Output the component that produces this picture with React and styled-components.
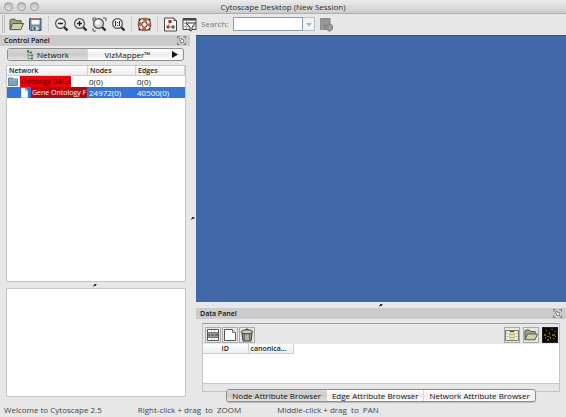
import React from "react";
import styled, { createGlobalStyle, css } from "styled-components";

const Global = createGlobalStyle`
  * { box-sizing: border-box; }
  body { margin: 0; background: #e7e7e7; }
  body, button, input, table { font-family: "Open Sans", "Noto Sans", sans-serif; font-size: 8px; line-height: 10px; color: #222; }
  button { padding: 0; border: 0; background: none; }
  svg { display: block; flex: none; }
`;

const Window = styled.div`
  display: flex;
  flex-direction: column;
  min-height: 100vh;
`;
const TitleBar = styled.header`
  display: grid;
  grid-template-columns: 1fr auto 1fr;
  align-items: center;
  height: 14px;
  padding: 0 4px;
  border-bottom: 1px solid #adadad;
  background: linear-gradient(#ececec, #cccccc);
`;
const Lights = styled.div`
  display: flex;
  gap: 4px;
`;
const Light = styled.button`
  width: 9px;
  height: 9px;
  border: 1px solid #9c9c9c;
  border-radius: 50%;
  background: linear-gradient(#b9b9b9, #e6e6e6);
`;
const Title = styled.h1`
  margin: 0;
  font-size: 8px;
  line-height: 12px;
  font-weight: 400;
  color: #2c2c2c;
`;
const Toolbar = styled.div`
  display: flex;
  align-items: center;
  gap: 4px;
  height: 20px;
  padding-left: 2px;
  background: #e7e7e7;
`;
const Handle = styled.span`
  width: 3px;
  height: 18px;
  border: solid #bdbdbd;
  border-width: 0 1px;
`;
const Separator = styled.span`
  width: 3px;
  height: 16px;
  background: repeating-linear-gradient(#b5b5b5 0 1px, transparent 1px 2px) 1px 0 / 1px 100% no-repeat;
`;
const ToolButton = styled.button`
  width: 15px;
  height: 15px;
`;
const SearchLabel = styled.label`
  width: 28px;
  color: #777;
  white-space: nowrap;
`;
const SearchBox = styled.div`
  display: flex;
  width: 82px;
  height: 14px;
`;
const SearchInput = styled.input`
  width: 70px;
  border: 1px solid #84a0b8;
  border-radius: 0;
  padding: 0 2px;
  background: #fff;
`;
const DropButton = styled.button`
  display: grid;
  place-items: center;
  width: 12px;
  border: 1px solid #b3c1cc;
  border-left: 0;
  background: #f2f2f2;
`;
const Main = styled.main`
  display: grid;
  grid-template-columns: 190px 6px minmax(0, 1fr);
  flex: 1;
  padding-top: 1px;
`;
const Column = styled.section`
  display: flex;
  flex-direction: column;
  min-width: 0;
  padding-bottom: ${(p) => (p.$inset ? 5 : 0)}px;
`;
const PanelHeader = styled.div`
  display: flex;
  align-items: center;
  justify-content: space-between;
  height: 11px;
  padding: 0 4px;
  background: #cbcbcb;
`;
const PanelTitle = styled.h2`
  margin: 0;
  font-size: 7px;
  line-height: 10px;
  font-weight: 600;
  color: #111;
`;
const FloatButton = styled.button`
  width: 9px;
  height: 9px;
`;
const TabBar = styled.div`
  display: flex;
  height: 13px;
  border: 1px solid #8d8d8d;
  border-radius: 3px;
  overflow: hidden;
  background: linear-gradient(#fff, #ededed 50%, #fafafa);
  ${(p) =>
    p.$bottom
      ? css`
          align-self: center;
          margin-top: -3px;
          box-shadow: 0 1px 1px #bbb;
          z-index: 1;
        `
      : css`
          margin: 2px 6px 4px 7px;
        `}
`;
const Tab = styled.button`
  display: flex;
  align-items: center;
  justify-content: center;
  gap: 3px;
  flex: ${(p) => p.$grow || "none"};
  padding: 0 5px;
  font-size: 8px;
  font-weight: 500;
  white-space: nowrap;
  color: #111;
  background: ${(p) => (p.$active ? "linear-gradient(#d8d8d8, #cacaca 50%, #e2e2e2)" : "transparent")};
  border-right: ${(p) => (p.$last ? 0 : "1px solid #d6d6d6")};
`;
const Pane = styled.div`
  flex: ${(p) => p.$flex};
  margin: 0 4px 0 6px;
  border: 1px solid #c6c6c6;
  background: #fff;
`;
const NetworkTable = styled.table`
  width: 100%;
  table-layout: fixed;
  border-collapse: separate;
  border-spacing: 0;
`;
const Head = styled.th`
  width: ${(p) => p.$width || "auto"};
  height: 10px;
  padding: 0 2px;
  font-weight: 600;
  font-size: 7px;
  line-height: 9px;
  text-align: ${(p) => p.$align || "left"};
  border-bottom: 1px solid #cfcfcf;
  border-right: 1px solid #cfcfcf;
  background: linear-gradient(#fff, #ededed);
`;
const Row = styled.tr`
  background: ${(p) => (p.$selected ? "#3476d8" : "#fff")};
  color: ${(p) => (p.$selected ? "#fff" : "#222")};
`;
const Cell = styled.td`
  height: 11px;
  padding: 0 0 0 1px;
  font-size: 8px;
  line-height: 11px;
  white-space: nowrap;
`;
const TreeItem = styled.div`
  display: flex;
  align-items: center;
  gap: 2px;
  height: 11px;
  padding-left: ${(p) => (p.$depth ? 12 : 0)}px;
`;
const NodeLabel = styled.span`
  height: 11px;
  padding: 0 1px;
  font-size: 7px;
  line-height: 11px;
  font-weight: 500;
  color: ${(p) => (p.$selected ? "#fff" : "#3c0000")};
  background: ${(p) => (p.$selected ? "#b40810" : "#ef0008")};
`;
const Splitter = styled.div`
  display: grid;
  place-items: center;
  height: ${(p) => (p.$vertical ? "auto" : "6px")};
`;
const Canvas = styled.div`
  flex: 1;
  border-top: 1px solid #2e548f;
  background: #4169a9;
`;
const DataFrame = styled.div`
  display: flex;
  flex-direction: column;
  margin: 4px 6px 0;
  padding: 1px 0 7px;
  border: 1px solid #c4c4c4;
  border-top: 1px solid #9f9f9f;
  border-radius: 1px;
`;
const DataTools = styled.div`
  display: flex;
  align-items: center;
  justify-content: space-between;
  height: 19px;
  padding: 0 1px 0 2px;
`;
const ToolGroup = styled.div`
  display: flex;
  gap: ${(p) => (p.$wide ? 3 : 1)}px;
`;
const DataButton = styled.button`
  width: 16px;
  height: 16px;
  border: 1px solid ${(p) => (p.$dark ? "#222" : "#aaa")};
`;
const Sheet = styled.div`
  height: 40px;
  border-bottom: 1px solid #c6c6c6;
  background: #fff;
`;
const DataTable = styled.table`
  width: 91px;
  table-layout: fixed;
  border-collapse: separate;
  border-spacing: 0;
`;
const StatusBar = styled.footer`
  display: flex;
  align-items: center;
  gap: 36px;
  height: 15px;
  padding-left: 4px;
  color: #444;
  white-space: pre;
`;

function Magnifier({ kind }) {
  return (
    <svg width="15" height="15" viewBox="0 0 15 15">
      {kind === "fit" && <path d="M1 4V1h3M11 1h3v3M1 11v3h3" fill="none" stroke="#555" />}
      <path d="M10 10l3.5 3.5" stroke="#303030" strokeWidth="2.4" />
      <circle cx="6.5" cy="6.5" r="4.9" fill={kind === "fit" ? "#d9d9d9" : "#ececec"} stroke="#525252" strokeWidth="1.2" />
      {kind === "out" && <path d="M4 6.5h5" stroke="#222" strokeWidth="1.5" />}
      {kind === "in" && <path d="M4 6.5h5M6.5 4v5" stroke="#222" strokeWidth="1.5" />}
      {kind === "fit" && <circle cx="5.7" cy="5.2" r="2.3" fill="#fafafa" />}
      {kind === "actual" && <path d="M4.5 4v5M8.5 4v5M6.5 5v1M6.5 8v1" stroke="#333" />}
    </svg>
  );
}
const FolderOpen = ({ size = 15 }) => (
  <svg width={size} height={size} viewBox="0 0 15 15">
    <path d="M1 12.5V3.2l1-1h4l1 1.5h5v2.5" fill="#9ca681" stroke="#4e573e" />
    <path d="M1.2 12.6l2.6-6.2h10.7L11.8 12.6z" fill="#cbd2ae" stroke="#4e573e" />
  </svg>
);
const Save = () => (
  <svg width="15" height="15" viewBox="0 0 15 15">
    <path d="M1.5 1.5h11.5v12H2.5l-1-1z" fill="#668daf" stroke="#46515b" />
    <path d="M3.5 1.5h8v6h-8z" fill="#f6f6f3" />
    <path d="M3.5 2.2h8" stroke="#c95046" strokeWidth="1.5" />
    <path d="M4.5 9.5h6v4h-6z" fill="#d6d6d6" />
    <path d="M5.5 10h2v3h-2z" fill="#425463" />
  </svg>
);
const LifeRing = () => (
  <svg width="15" height="15" viewBox="0 0 15 15">
    <path d="M2 2l2 2M13 2l-2 2M2 13l2-2M13 13l-2-2" stroke="#443b38" strokeWidth="2.5" />
    <circle cx="7.5" cy="7.5" r="4.5" fill="none" stroke="#4b302b" strokeWidth="4.6" />
    <circle cx="7.5" cy="7.5" r="4.5" fill="none" stroke="#f1e8df" strokeWidth="2.8" />
    <circle cx="7.5" cy="7.5" r="4.5" fill="none" stroke="#d45635" strokeWidth="2.8" strokeDasharray="4 3.07" strokeDashoffset="2" />
  </svg>
);
const VizMap = () => (
  <svg width="15" height="15" viewBox="0 0 15 15">
    <path d="M1.5 1h9.5l2.5 2.5V14h-12z" fill="#f8f8f4" stroke="#444" />
    <path d="M11 1v2.5h2.5" fill="#ccc" stroke="#555" />
    <path d="M7 5L4.5 10H10" fill="none" stroke="#777" strokeWidth=".7" />
    <path d="M5.5 3h3v3h-3z" fill="#8f2f28" />
    <circle cx="5" cy="10" r="1.8" fill="#b1472e" />
    <path d="M10 7.8l2.2 2.2-2.2 2.2L7.8 10z" fill="#4f7c43" />
  </svg>
);
const Filter = () => (
  <svg width="15" height="15" viewBox="0 0 15 15">
    <path d="M1 1.5h13v11H1z" fill="#eee" stroke="#454545" />
    <path d="M1 2.5h13" stroke="#454545" strokeWidth="2" />
    <path d="M1 6.5h13M1 9.5h13M4.5 4v8" stroke="#aaa" />
    <path d="M4 6h9.5L10 10v3l-2 1v-4z" fill="#fff" stroke="#333" />
  </svg>
);
const Book = () => (
  <svg width="15" height="15" viewBox="0 0 15 15">
    <path d="M1 1h10.5v12H1z" fill="#8c8c8c" />
    <path d="M3 1v12M5 4h5M5 6h5" stroke="#a5a5a5" />
    <path d="M7.5 9l2-2h2L13.5 9v3l-2 2h-2l-2-2z" fill="#9a9a9a" stroke="#808080" />
  </svg>
);
const FloatIcon = () => (
  <svg width="9" height="9" viewBox="0 0 9 9">
    <path d="M.5 2.5v-2h2M6.5.5h2v2M.5 6.5v2h2M6.5 8.5h2v-2" fill="none" stroke="#777" />
    <path d="M2.5 2.5h2v2h-2z" fill="#eee" stroke="#888" />
    <path d="M4.5 3.5h2v3h-3v-2" fill="#eee" stroke="#888" />
  </svg>
);
const SplitMark = () => (
  <svg width="4" height="3" viewBox="0 0 4 3">
    <path d="M1 0h2v2H1z" fill="#333" />
    <path d="M0 1h1v2H0zM3 0h1v1H3z" fill="#888" />
  </svg>
);
const TreeIcon = () => (
  <svg width="8" height="10" viewBox="0 0 8 10">
    <path d="M2 1v7.5h4M2 2.5h3M2 5.5h4" fill="none" stroke="#6d9b76" />
    <path d="M1 0h2v2H1zM4 1.5h2v2H4zM5 4.5h2v2H5zM5 7.5h2v2H5z" fill="#358b45" />
  </svg>
);
const BlueFolder = () => (
  <svg width="10" height="9" viewBox="0 0 10 9">
    <path d="M.5 2V1h4l1 1h4v6.5h-9z" fill="#78a5bf" stroke="#5d879f" />
    <path d="M1 3h8" stroke="#8db6cc" />
  </svg>
);
const Page = () => (
  <svg width="9" height="10" viewBox="0 0 9 10">
    <path d="M1.5.5h4l2 2v7h-6z" fill="#fff" stroke="#d5e1f2" />
    <path d="M5.5.5v2h2" fill="#ccd" stroke="#8aa4c4" />
  </svg>
);
const AttributeIcon = () => (
  <svg width="14" height="14" viewBox="0 0 14 14">
    <path d="M1.5 1.5h11v11h-11z" fill="#fff" stroke="#555" />
    <path d="M5.5 2v10M8.5 2v10" stroke="#ccc" />
    <path d="M2 5h10v4H2z" fill="#999" />
    <path d="M2 4.5h10M2 9.5h10" stroke="#777" />
    <path d="M1 7h12" stroke="#444" strokeDasharray="3 1" />
  </svg>
);
const NewPage = () => (
  <svg width="14" height="14" viewBox="0 0 14 14">
    <path d="M1.5 1.5h8l3 3v8h-11z" fill="#fff" stroke="#555" />
    <path d="M9.5 1.5v3h3" fill="#ddd" stroke="#777" />
  </svg>
);
const Trash = () => (
  <svg width="14" height="14" viewBox="0 0 14 14">
    <path d="M2 5h10l-1 8H3z" fill="#97978a" stroke="#3c3c36" />
    <path d="M4.5 6l.3 6M9.5 6l-.3 6" stroke="#55554d" strokeWidth=".8" />
    <path d="M6 6.5V12M8 6.5V12" stroke="#d2d2c4" />
    <ellipse cx="7" cy="3.8" rx="5.8" ry="2" fill="#cbcbba" stroke="#44443d" />
    <path d="M5.5 1.8q1.5-2 3 0" fill="none" stroke="#333" />
  </svg>
);
const SelectAttributes = () => (
  <svg width="14" height="14" viewBox="0 0 14 14">
    <path d="M.5 2.5h13v10H.5z" fill="#eee" stroke="#777" />
    <path d="M1 5.5h12M1 8.5h12" stroke="#c4c4c4" />
    <path d="M4 3h6v9H4z" fill="#ead79b" />
    <path d="M5 3.5h4" stroke="#44433c" />
    <path d="M4 6.5h6M4 9.5h6" stroke="#cdb676" />
  </svg>
);
const Matrix = () => (
  <svg width="14" height="14" viewBox="0 0 14 14">
    <path d="M0 0h14v14H0z" fill="#0c0905" />
    <path d="M1 6h2v2H1zM4 8h3v1H4zM6 4h1v3H6zM8 1h2v1H8zM9 6h3v2H9zM11 3h2v1h-2zM4 11h2v2H4zM10 10h2v1h-2z" fill="#7a581f" />
    <path d="M2 9h1v1H2zM7 9h1v2H7zM12 8h1v1h-1zM3 2h1v1H3z" fill="#a67d2d" />
  </svg>
);
const Triangle = ({ down }) => (
  <svg width="6" height="7" viewBox="0 0 6 7">
    <path d={down ? "M0 2h6L3 5.5z" : "M0 0l6 3.5L0 7z"} fill={down ? "#a3b6c5" : "#111"} />
  </svg>
);

export default function App() {
  return (
    <Window>
      <Global />
      <TitleBar>
        <Lights>
          <Light aria-label="Close" />
          <Light aria-label="Minimize" />
          <Light aria-label="Zoom window" />
        </Lights>
        <Title>Cytoscape Desktop (New Session)</Title>
      </TitleBar>
      <Toolbar>
        <Handle />
        <ToolButton aria-label="Open"><FolderOpen /></ToolButton>
        <ToolButton aria-label="Save"><Save /></ToolButton>
        <Separator />
        <ToolButton aria-label="Zoom out"><Magnifier kind="out" /></ToolButton>
        <ToolButton aria-label="Zoom in"><Magnifier kind="in" /></ToolButton>
        <ToolButton aria-label="Zoom to fit"><Magnifier kind="fit" /></ToolButton>
        <ToolButton aria-label="Actual size"><Magnifier kind="actual" /></ToolButton>
        <Separator />
        <ToolButton aria-label="Help"><LifeRing /></ToolButton>
        <Separator />
        <ToolButton aria-label="Visual styles"><VizMap /></ToolButton>
        <ToolButton aria-label="Filters"><Filter /></ToolButton>
        <SearchLabel htmlFor="search">Search:</SearchLabel>
        <SearchBox>
          <SearchInput id="search" />
          <DropButton aria-label="Search history"><Triangle down /></DropButton>
        </SearchBox>
        <ToolButton aria-label="Configure search"><Book /></ToolButton>
      </Toolbar>
      <Main>
        <Column $inset>
          <PanelHeader>
            <PanelTitle>Control Panel</PanelTitle>
            <FloatButton aria-label="Float control panel"><FloatIcon /></FloatButton>
          </PanelHeader>
          <TabBar role="tablist">
            <Tab role="tab" aria-selected="true" $active $grow="1 1 0"><TreeIcon />Network</Tab>
            <Tab role="tab" aria-selected="false" $grow="1 1 0" $last>VizMapper™</Tab>
            <Tab aria-label="More tabs" $last><Triangle /></Tab>
          </TabBar>
          <Pane $flex="218 1 0">
            <NetworkTable>
              <thead>
                <tr>
                  <Head>Network</Head>
                  <Head $width="48px">Nodes</Head>
                  <Head $width="49px">Edges</Head>
                </tr>
              </thead>
              <tbody>
                <Row>
                  <Cell><TreeItem><BlueFolder /><NodeLabel>Ontology DAGs</NodeLabel></TreeItem></Cell>
                  <Cell>0(0)</Cell>
                  <Cell>0(0)</Cell>
                </Row>
                <Row $selected>
                  <Cell><TreeItem $depth={1}><Page /><NodeLabel $selected>Gene Ontology F</NodeLabel></TreeItem></Cell>
                  <Cell>24972(0)</Cell>
                  <Cell>40500(0)</Cell>
                </Row>
              </tbody>
            </NetworkTable>
          </Pane>
          <Splitter><SplitMark /></Splitter>
          <Pane $flex="108 1 0" />
        </Column>
        <Splitter $vertical><SplitMark /></Splitter>
        <Column>
          <Canvas />
          <Splitter><SplitMark /></Splitter>
          <PanelHeader>
            <PanelTitle>Data Panel</PanelTitle>
            <FloatButton aria-label="Float data panel"><FloatIcon /></FloatButton>
          </PanelHeader>
          <DataFrame>
            <DataTools>
              <ToolGroup>
                <DataButton aria-label="Select attributes"><AttributeIcon /></DataButton>
                <DataButton aria-label="Create attribute"><NewPage /></DataButton>
                <DataButton aria-label="Delete attribute"><Trash /></DataButton>
              </ToolGroup>
              <ToolGroup $wide>
                <DataButton aria-label="Batch edit"><SelectAttributes /></DataButton>
                <DataButton aria-label="Import attributes"><FolderOpen size={14} /></DataButton>
                <DataButton aria-label="Matrix import" $dark><Matrix /></DataButton>
              </ToolGroup>
            </DataTools>
            <Sheet>
              <DataTable>
                <thead>
                  <tr>
                    <Head $align="center">ID</Head>
                    <Head>canonica...</Head>
                  </tr>
                </thead>
              </DataTable>
            </Sheet>
          </DataFrame>
          <TabBar $bottom role="tablist">
            <Tab role="tab" aria-selected="true" $active>Node Attribute Browser</Tab>
            <Tab role="tab" aria-selected="false">Edge Attribute Browser</Tab>
            <Tab role="tab" aria-selected="false" $last>Network Attribute Browser</Tab>
          </TabBar>
        </Column>
      </Main>
      <StatusBar>
        <span>Welcome to Cytoscape 2.5</span>
        <span>Right-click + drag  to  ZOOM</span>
        <span>Middle-click + drag  to  PAN</span>
      </StatusBar>
    </Window>
  );
}
